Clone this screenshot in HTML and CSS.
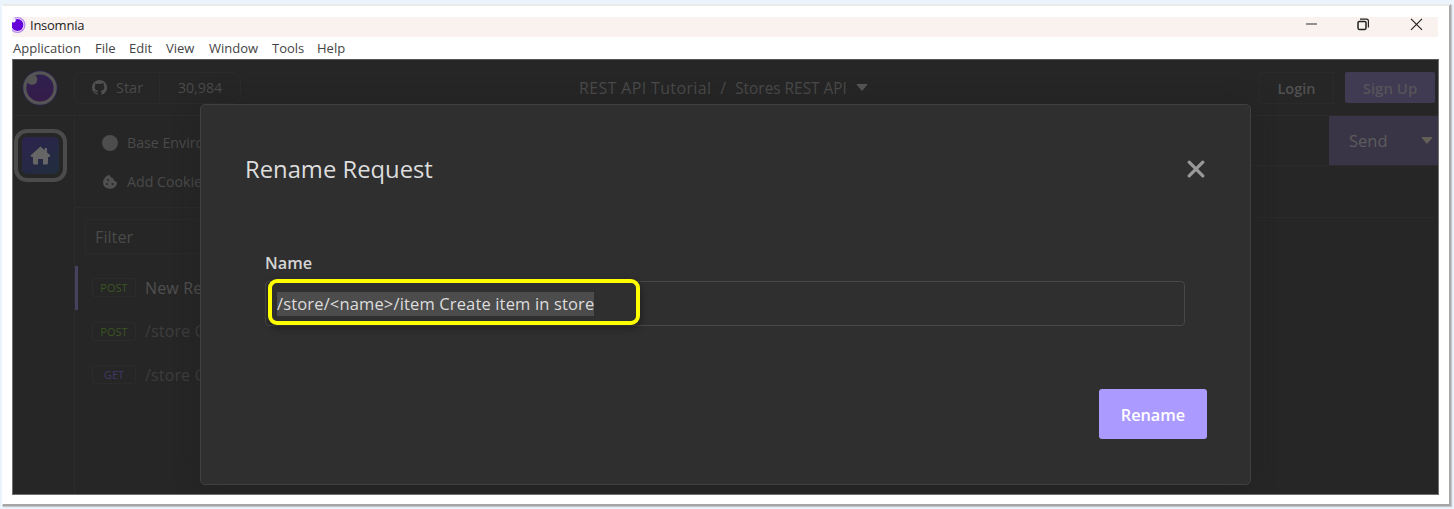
FILE: index.html
```html
<!DOCTYPE html>
<html lang="en">
<head>
<meta charset="utf-8">
<title>Insomnia</title>
<link rel="stylesheet" href="styles.css">
</head>
<body>
<div class="frame">
  <header class="titlebar">
    <svg class="app-icon" width="15" height="18" viewBox="0 0 15 18"><circle cx="5.5" cy="8" r="8" fill="#b58af0"/><circle cx="5.5" cy="8" r="6.7" fill="#f5eefc"/><circle cx="5.5" cy="8" r="5.9" fill="#6500d8"/><circle cx="1.5" cy="3.2" r="2.2" fill="#f5eefc"/></svg>
    <span class="app-name">Insomnia</span>
    <svg class="window-controls" width="120" height="20" viewBox="0 0 120 20" fill="none" stroke="#222" stroke-width="1.2"><path d="M1 7H12" stroke="#666" stroke-width="1.4"/><rect x="53" y="4.4" width="8" height="8" rx="1.3" stroke-width="1.5"/><path d="M55 2.2H61.5Q63.4 2.2 63.4 4.2V10.5"/><path d="M106 1.8L117 12.8M117 1.8L106 12.8"/></svg>
  </header>
  <nav class="menu">
    <span class="m-app">Application</span><span class="m-file">File</span><span class="m-edit">Edit</span><span class="m-view">View</span><span class="m-window">Window</span><span class="m-tools">Tools</span><span>Help</span>
  </nav>
  <div class="app">
    <div class="topbar">
      <svg class="logo" width="36" height="36" viewBox="0 0 36 36"><defs><linearGradient id="lg" x2="0" y2="1"><stop stop-color="#2f2150"/><stop offset="1" stop-color="#361b48"/></linearGradient></defs><circle cx="18" cy="18" r="17.5" fill="#2d2051"/><circle cx="18" cy="18" r="15.2" fill="url(#lg)" stroke="#555" stroke-width="3.2"/><circle cx="10" cy="9.5" r="5.3" fill="#555"/></svg>
      <div class="github">
        <div class="star"><svg width="15" height="15" viewBox="0 0 16 16" fill="#505050"><path d="M8 0a8 8 0 0 0-2.53 15.59c.4.07.55-.17.55-.38v-1.49c-2.23.49-2.7-.95-2.7-.95-.36-.92-.89-1.17-.89-1.17-.73-.5.05-.49.05-.49.81.06 1.23.83 1.23.83.72 1.23 1.88.87 2.34.67.07-.52.28-.87.51-1.07-1.78-.2-3.65-.89-3.65-3.95 0-.88.31-1.59.82-2.15-.08-.2-.36-1.02.08-2.12 0 0 .67-.21 2.2.82a7.7 7.7 0 0 1 4 0c1.53-1.04 2.2-.82 2.2-.82.44 1.1.16 1.92.08 2.12.51.56.82 1.27.82 2.15 0 3.07-1.87 3.75-3.66 3.95.29.25.54.73.54 1.48v2.2c0 .21.15.46.55.38A8 8 0 0 0 8 0z"/></svg><span>Star</span></div>
        <div class="count">30,984</div>
      </div>
      <div class="crumbs"><span class="c1">REST API Tutorial</span><span>/</span><span class="c2">Stores REST API</span><svg width="12" height="8" viewBox="0 0 12 8"><path d="M1 .5H11L6 6.5Z" fill="#555" stroke="#555" stroke-linejoin="round"/></svg></div>
      <div class="login">Login</div>
      <div class="signup">Sign Up</div>
    </div>
    <div class="body">
      <aside class="rail"><div class="home"><div class="home-tile"><svg width="21" height="19" viewBox="0 0 21 19" fill="#666"><path d="M10.5 .5L.5 9.6L1.6 11H3V17Q3 18.5 4.5 18.5H8V13H13V18.5H16.5Q18 18.5 18 17V11H19.4L20.5 9.6L17 6.4V2H14.7V4.3Z"/></svg></div></div></aside>
      <section class="side">
        <div class="tools">
          <div class="tool"><svg width="16" height="16" viewBox="0 0 16 16"><circle cx="8" cy="8" r="8" fill="#4d4d4d"/></svg><span class="t-env">Base Environment</span></div>
          <div class="tool"><svg width="16" height="16" viewBox="0 0 16 16"><path d="M7.5 1Q8.5 4 11 4.2Q11.5 7 15 8Q15 11 13 13Q10 15.5 6 14.6Q1.5 13.5 1 9Q.8 5.5 3 3.4Q5 1 7.5 1Z" fill="#505050"/><circle cx="6" cy="6" r="1" fill="#262626"/><circle cx="5" cy="10" r="1" fill="#262626"/><circle cx="10.5" cy="10" r="1" fill="#262626"/></svg><span class="t-cookie">Add Cookies</span></div>
        </div>
        <div class="filter">Filter</div>
        <div class="request active"><b class="method">POST</b><span>New Request</span></div>
        <div class="request"><b class="method">POST</b><span>/store Create</span></div>
        <div class="request"><b class="method get">GET</b><span>/store Get</span></div>
      </section>
      <main class="content">
        <div class="urlbar"><div class="send"><span>Send</span><svg width="12" height="8" viewBox="0 0 12 8"><path d="M1 .5H11L6 6.5Z" fill="#626058" stroke="#626058" stroke-linejoin="round"/></svg></div></div>
        <div class="tabs"></div>
      </main>
    </div>
    <div class="modal">
      <div class="modal-head"><h1>Rename Request</h1><svg width="18" height="18" viewBox="0 0 18 18"><path d="M2.2 2.2L15.8 15.8M15.8 2.2L2.2 15.8" stroke="#999" stroke-width="3.2" stroke-linecap="round"/></svg></div>
      <div class="label">Name</div>
      <div class="field"><span class="selected">/store/&lt;name&gt;/item Create item in store</span><div class="highlight"></div></div>
      <div class="rename">Rename</div>
    </div>
  </div>
</div>
</body>
</html>
```
FILE: styles.css
```css
* { box-sizing: border-box; }
body { margin: 0; height: 509px; padding: 4px 0 0 2px; overflow: hidden; background: #ebf4fc; font-family: "Open Sans", "Noto Sans", sans-serif; }
span, .count, .login, .signup, .label, .rename, h1 { white-space: nowrap; }
.frame { width: 1449px; height: 502px; padding: 11px 9px 0 9px; background: #fff; border: solid; border-width: 2px 2px 2px 1px; border-color: #eaeaea #aaa #a5a5a5 #fff; box-shadow: 1px 1px 1px #c3c6ca; }
.titlebar { display: flex; width: 1426px; height: 20px; background: #faf2ee; color: #222; font-size: 13px; }
.app-icon { flex: none; }
.app-name { margin-left: 3px; line-height: 16px; letter-spacing: -.25px; }
.window-controls { margin-left: auto; margin-right: 13px; }
.menu { display: flex; height: 22px; padding-left: 1px; line-height: 22px; font-size: 13px; color: #444; }
.menu span { flex: none; }
.m-app { width: 82px; } .m-file { width: 34px; } .m-edit { width: 37px; } .m-view { width: 43px; } .m-window { width: 63px; } .m-tools { width: 45px; }
.app { position: relative; width: 1427px; height: 436px; background: #262626; overflow: hidden; border: 1px solid #707070; border-top-color: #555; color: #4a4a4a; }
.topbar { display: flex; align-items: center; height: 56px; padding: 0 3px 0 9px; border-bottom: 1px solid #2b2b2b; }
.logo { flex: none; }
.github { display: flex; width: 167px; height: 32px; margin-left: 16px; border: 1px solid #2b2b2b; border-radius: 8px; line-height: 30px; font-size: 14.5px; }
.star { display: flex; align-items: center; width: 85px; padding-left: 17px; gap: 9px; border-right: 1px solid #2b2b2b; }
.count { flex: 1; text-align: center; font-size: 14.2px; }
.crumbs { display: flex; align-items: baseline; margin-left: 338px; font-size: 16px; gap: 9px; }
.crumbs svg { align-self: center; }
.c1 { letter-spacing: .35px; }
.c2 { font-size: 15.4px; }
.login { width: 75px; height: 32px; margin-left: auto; border: 1px solid #2a2a2a; text-align: center; line-height: 31px; font-size: 14.5px; font-weight: 600; color: #505050; }
.signup { width: 90px; height: 31px; margin-left: 11px; background: #403b52; border-radius: 2px; text-align: center; line-height: 33px; font-size: 15px; font-weight: 600; color: #56545a; }
.body { display: flex; height: 378px; }
.rail { width: 62px; border-right: 1px solid #2b2b2b; padding: 13px 0 0 1px; }
.home { width: 53px; height: 53px; padding: 4px; border: 4px solid #4b4b4b; border-radius: 13px; }
.home-tile { display: flex; align-items: center; justify-content: center; height: 37px; border-radius: 5px; background: linear-gradient(145deg, #2d2350, #202e3c); }
.side { width: 300px; }
.tools { height: 92px; padding: 7px 0 0 27px; border-bottom: 1px solid #2b2b2b; }
.tool { display: flex; align-items: center; height: 39px; gap: 9px; font-size: 14.2px; }
.filter { margin: 11px 0 12px 10px; width: 230px; height: 35px; border: 1px solid #2a2a2a; padding-left: 9px; line-height: 35px; font-size: 16.3px; }
.request { display: flex; align-items: center; height: 43.5px; padding-left: 14px; border-left: 3px solid transparent; font-size: 16px; letter-spacing: .15px; gap: 9px; color: #3d3d3d; }
.active { border-left-color: #47405f; color: #505050; }
.method { width: 44px; height: 19px; border: 1px solid #2b2b2b; border-radius: 2px; text-align: center; font-size: 11px; letter-spacing: 0; font-weight: 400; line-height: 17px; color: #3a5522; }
.get { color: #403a66; }
.content { flex: 1; }
.urlbar { display: flex; justify-content: flex-end; height: 50px; border-bottom: 1px solid #2b2b2b; }
.send { display: flex; align-items: center; width: 109px; padding-left: 20px; background: #393547; color: #5d5c5c; font-size: 16.5px; }
.send svg { flex: none; margin-left: auto; margin-right: 5px; }
.tabs { height: 52px; border-bottom: 1px solid #2a2a2a; }
.modal { position: absolute; left: 187px; top: 44px; width: 1051px; height: 381px; padding: 43px 43px 0 44px; background: #2f2f2f; border: 1px solid #404040; border-radius: 5px; box-shadow: 0 0 25px #1e1e1e66; color: #ddd; }
.modal-head { display: flex; justify-content: space-between; align-items: center; height: 42px; padding-right: 2px; }
h1 { margin: 0; font-size: 23.8px; font-weight: 400; }
.label { margin: 63px 0 0 20px; height: 20px; line-height: 20px; font-size: 16.3px; font-weight: 600; color: #d5d5d5; }
.field { position: relative; display: flex; align-items: center; width: 920px; height: 45px; margin: 8px 0 0 20px; padding-left: 11px; border: 1px solid #484848; border-radius: 4px; font-size: 16.5px; letter-spacing: .15px; }
.selected { height: 24px; line-height: 24px; background: #4c4c4c; }
.highlight { position: absolute; left: 2px; top: -3px; width: 372px; height: 46px; border: 4px solid #ff0; border-radius: 9px; box-shadow: 1px 3px 6px #1118; }
.rename { width: 108px; height: 50px; margin: 63px 0 0 auto; background: #ab9aff; border-radius: 3px; text-align: center; line-height: 52px; font-size: 16.3px; font-weight: 600; color: #fff; }
```
